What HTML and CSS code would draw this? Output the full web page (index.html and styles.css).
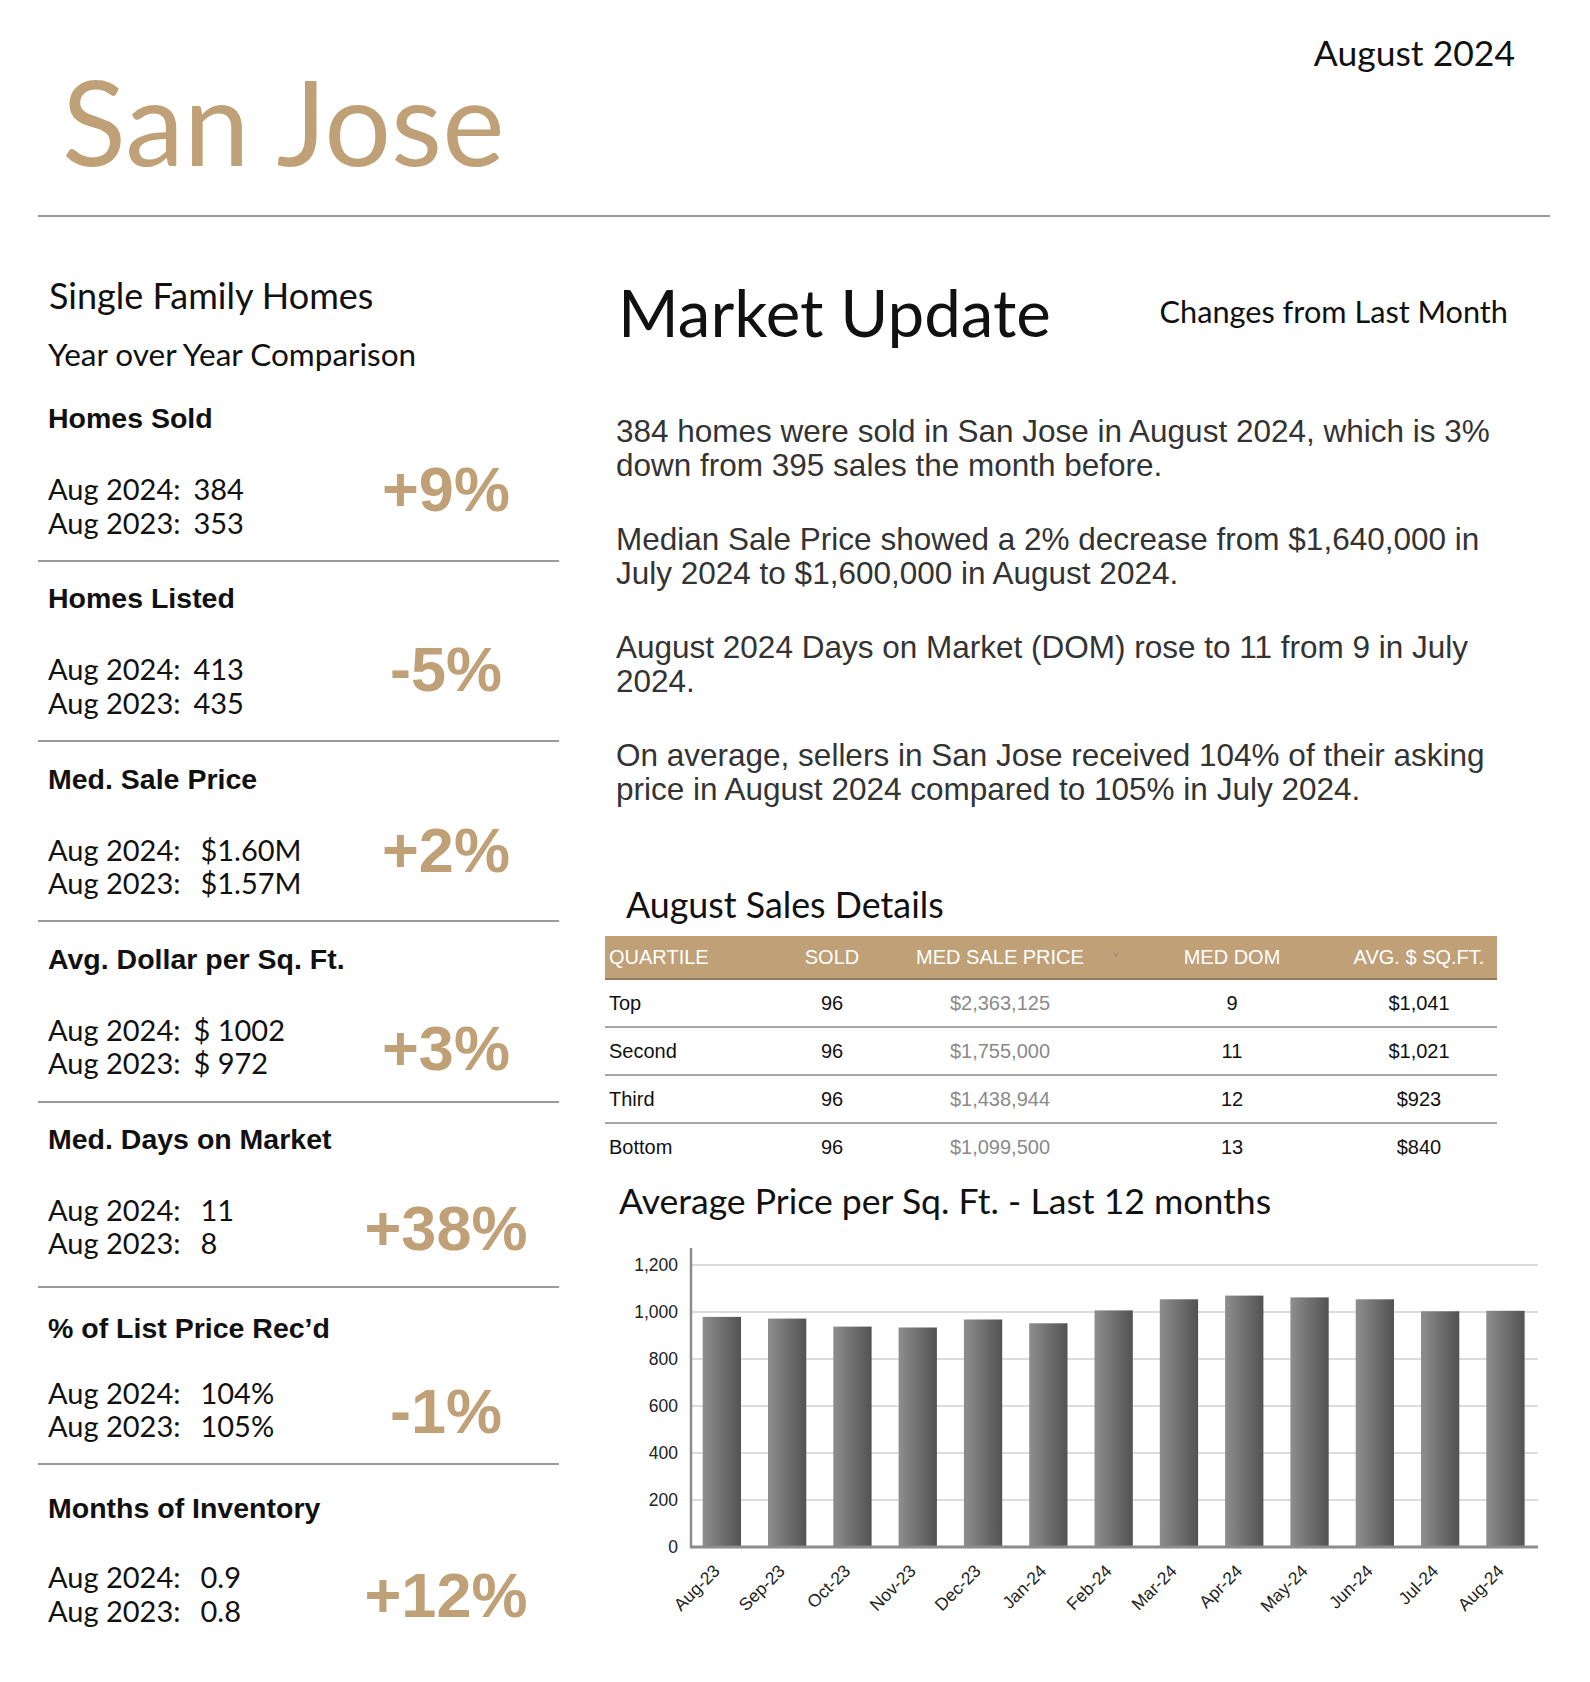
FILE: index.html
```html
<!DOCTYPE html>
<html lang="en">
<head>
<meta charset="utf-8">
<title>San Jose Market Update - August 2024</title>
<link rel="stylesheet" href="styles.css">
</head>
<body>
<div class="page">
  <header class="masthead">
    <h1 class="city">San Jose</h1>
    <div class="date">August 2024</div>
  </header>
  <hr class="rule">
  <main class="content">
    <aside class="stats">
      <h2 class="segment">Single Family Homes</h2>
      <p class="compare">Year over Year Comparison</p>

      <section class="stat stat--first">
        <h3 class="stat-title">Homes Sold</h3>
        <div class="stat-body">
          <div class="stat-rows">
            <div><span>Aug 2024:</span><span class="stat-val">384</span></div>
            <div><span>Aug 2023:</span><span class="stat-val">353</span></div>
          </div>
          <div class="stat-change stat-change--raised">+9%</div>
        </div>
      </section>

      <section class="stat">
        <h3 class="stat-title">Homes Listed</h3>
        <div class="stat-body">
          <div class="stat-rows">
            <div><span>Aug 2024:</span><span class="stat-val">413</span></div>
            <div><span>Aug 2023:</span><span class="stat-val">435</span></div>
          </div>
          <div class="stat-change stat-change--raised">-5%</div>
        </div>
      </section>

      <section class="stat">
        <h3 class="stat-title">Med. Sale Price</h3>
        <div class="stat-body">
          <div class="stat-rows">
            <div><span>Aug 2024:</span><span class="stat-val stat-val--wide">$1.60M</span></div>
            <div><span>Aug 2023:</span><span class="stat-val stat-val--wide">$1.57M</span></div>
          </div>
          <div class="stat-change stat-change--raised">+2%</div>
        </div>
      </section>

      <section class="stat">
        <h3 class="stat-title">Avg. Dollar per Sq. Ft.</h3>
        <div class="stat-body">
          <div class="stat-rows">
            <div><span>Aug 2024:</span><span class="stat-val">$ 1002</span></div>
            <div><span>Aug 2023:</span><span class="stat-val">$ 972</span></div>
          </div>
          <div class="stat-change">+3%</div>
        </div>
      </section>

      <section class="stat stat--roomy">
        <h3 class="stat-title">Med. Days on Market</h3>
        <div class="stat-body">
          <div class="stat-rows">
            <div><span>Aug 2024:</span><span class="stat-val stat-val--wide">11</span></div>
            <div><span>Aug 2023:</span><span class="stat-val stat-val--wide">8</span></div>
          </div>
          <div class="stat-change">+38%</div>
        </div>
      </section>

      <section class="stat stat--list">
        <h3 class="stat-title">% of List Price Rec’d</h3>
        <div class="stat-body stat-body--tight">
          <div class="stat-rows">
            <div><span>Aug 2024:</span><span class="stat-val stat-val--wide">104%</span></div>
            <div><span>Aug 2023:</span><span class="stat-val stat-val--wide">105%</span></div>
          </div>
          <div class="stat-change">-1%</div>
        </div>
      </section>

      <section class="stat stat--last">
        <h3 class="stat-title">Months of Inventory</h3>
        <div class="stat-body stat-body--snug">
          <div class="stat-rows">
            <div><span>Aug 2024:</span><span class="stat-val stat-val--wide">0.9</span></div>
            <div><span>Aug 2023:</span><span class="stat-val stat-val--wide">0.8</span></div>
          </div>
          <div class="stat-change">+12%</div>
        </div>
      </section>
    </aside>

    <section class="update">
      <div class="update-head">
        <h2 class="update-title">Market Update</h2>
        <div class="update-sub">Changes from Last Month</div>
      </div>

      <div class="summary">
        <p>384 homes were sold in San Jose in August 2024, which is 3% down from 395 sales the month before.</p>
        <p>Median Sale Price showed a 2% decrease from $1,640,000 in July 2024 to $1,600,000 in August 2024.</p>
        <p>August 2024 Days on Market (DOM) rose to 11 from 9 in July 2024.</p>
        <p>On average, sellers in San Jose received 104% of their asking price in August 2024 compared to 105% in July 2024.</p>
      </div>

      <h2 class="details-title">August Sales Details</h2>
      <table class="sales-table">
        <colgroup>
          <col class="col-q"><col class="col-sold"><col class="col-price"><col class="col-dom"><col class="col-avg">
        </colgroup>
        <thead>
          <tr>
            <th>QUARTILE</th>
            <th>SOLD</th>
            <th class="sortable">MED SALE PRICE<span class="sort"></span></th>
            <th>MED DOM</th>
            <th>AVG. $ SQ.FT.</th>
          </tr>
        </thead>
        <tbody>
          <tr><td>Top</td><td>96</td><td class="price">$2,363,125</td><td>9</td><td>$1,041</td></tr>
          <tr><td>Second</td><td>96</td><td class="price">$1,755,000</td><td>11</td><td>$1,021</td></tr>
          <tr><td>Third</td><td>96</td><td class="price">$1,438,944</td><td>12</td><td>$923</td></tr>
          <tr><td>Bottom</td><td>96</td><td class="price">$1,099,500</td><td>13</td><td>$840</td></tr>
        </tbody>
      </table>

      <h2 class="chart-title">Average Price per Sq. Ft. - Last 12 months</h2>
      <svg class="chart" width="945" height="400" viewBox="0 0 945 400" xmlns="http://www.w3.org/2000/svg">
        <defs>
          <linearGradient id="barGrad" x1="0" y1="0" x2="1" y2="0">
            <stop offset="0" stop-color="#8e8e8e"/>
            <stop offset="1" stop-color="#525252"/>
          </linearGradient>
        </defs>
        <g class="grid">
          <line x1="86" y1="35" x2="933" y2="35"/>
          <line x1="86" y1="82" x2="933" y2="82"/>
          <line x1="86" y1="129" x2="933" y2="129"/>
          <line x1="86" y1="176" x2="933" y2="176"/>
          <line x1="86" y1="223" x2="933" y2="223"/>
          <line x1="86" y1="270" x2="933" y2="270"/>
        </g>
        <g class="ylabels">
          <text x="73" y="41">1,200</text>
          <text x="73" y="88">1,000</text>
          <text x="73" y="135">800</text>
          <text x="73" y="182">600</text>
          <text x="73" y="229">400</text>
          <text x="73" y="276">200</text>
          <text x="73" y="323">0</text>
        </g>
        <g class="bars">
          <rect x="97.7" y="86.9" width="38.3" height="230.1"/>
          <rect x="163.0" y="88.6" width="38.3" height="228.4"/>
          <rect x="228.3" y="96.6" width="38.3" height="220.4"/>
          <rect x="293.6" y="97.5" width="38.3" height="219.5"/>
          <rect x="358.9" y="89.5" width="38.3" height="227.5"/>
          <rect x="424.2" y="93.3" width="38.3" height="223.7"/>
          <rect x="489.5" y="80.4" width="38.3" height="236.6"/>
          <rect x="554.8" y="69.3" width="38.3" height="247.7"/>
          <rect x="620.1" y="65.6" width="38.3" height="251.4"/>
          <rect x="685.4" y="67.4" width="38.3" height="249.6"/>
          <rect x="750.7" y="69.3" width="38.3" height="247.7"/>
          <rect x="816.0" y="81.3" width="38.3" height="235.7"/>
          <rect x="881.3" y="80.8" width="38.3" height="236.2"/>
        </g>
        <line class="axis" x1="86" y1="18" x2="86" y2="318"/>
        <line class="axis axis--x" x1="85" y1="317" x2="933" y2="317"/>
        <g class="xlabels">
          <text transform="translate(116,342) rotate(-45)">Aug-23</text>
          <text transform="translate(181,342) rotate(-45)">Sep-23</text>
          <text transform="translate(246.5,342) rotate(-45)">Oct-23</text>
          <text transform="translate(312,342) rotate(-45)">Nov-23</text>
          <text transform="translate(377,342) rotate(-45)">Dec-23</text>
          <text transform="translate(442.5,342) rotate(-45)">Jan-24</text>
          <text transform="translate(508,342) rotate(-45)">Feb-24</text>
          <text transform="translate(573,342) rotate(-45)">Mar-24</text>
          <text transform="translate(638.5,342) rotate(-45)">Apr-24</text>
          <text transform="translate(704,342) rotate(-45)">May-24</text>
          <text transform="translate(769,342) rotate(-45)">Jun-24</text>
          <text transform="translate(834.5,342) rotate(-45)">Jul-24</text>
          <text transform="translate(900,342) rotate(-45)">Aug-24</text>
        </g>
      </svg>
    </section>
  </main>
</div>
</body>
</html>
```

FILE: styles.css
```css
* {
  box-sizing: border-box;
}

body {
  margin: 0;
  background: #ffffff;
  color: #111111;
  font-family: Lato, "Liberation Sans", sans-serif;
}

.page {
  width: 1590px;
  min-height: 1682px;
}

/* ---------- masthead ---------- */
.masthead {
  display: flex;
  justify-content: space-between;
  align-items: flex-start;
  padding: 33px 75px 0 62px;
}

.city {
  margin: 29px 0 0;
  font: 400 118px/118px Lato, sans-serif;
  color: #bfa077;
}

.date {
  font: 400 35.5px/40px Lato, sans-serif;
  color: #111111;
}

.rule {
  height: 0;
  margin: 35px 40px 0 38px;
  border: 0;
  border-top: 2px solid #9a9a9a;
}

/* ---------- two columns ---------- */
.content {
  display: grid;
  grid-template-columns: 521px 1fr;
  column-gap: 46px;
  margin: 0 40px 0 38px;
  padding-top: 57px;
}

/* ---------- left column ---------- */
.segment {
  margin: 0;
  padding-left: 11px;
  font: 400 36px/42px Lato, sans-serif;
}

.compare {
  margin: 19.5px 0 0;
  padding-left: 10px;
  font: 400 31.5px/36px Lato, sans-serif;
}

.stat {
  padding: 19.3px 13px 20.85px 10px;
  border-bottom: 2px solid #9a9a9a;
}

.stat--first {
  margin-top: 10.5px;
}

.stat--roomy {
  padding-bottom: 26.2px;
}

.stat--list {
  padding-top: 22.5px;
}

.stat--last {
  padding-top: 26px;
  border-bottom: 0;
}

.stat-title {
  margin: 0;
  font: 700 28.5px/34px "Liberation Sans", Arial, sans-serif;
  color: #111111;
}

.stat-body {
  display: flex;
  align-items: flex-end;
  margin-top: 37px;
}

.stat-body--tight {
  margin-top: 31px;
}

.stat-body--snug {
  margin-top: 35px;
}

.stat-rows {
  flex: 1;
  font: 400 29px/33.5px Lato, sans-serif;
  color: #111111;
  white-space: nowrap;
}

.stat-val {
  margin-left: 13px;
}

.stat-val--wide {
  margin-left: 20px;
}

.stat-change {
  width: 200px;
  text-align: center;
  font: 700 63px/63px "Liberation Sans", Arial, sans-serif;
  color: #bfa077;
}

.stat-change--raised {
  margin-top: -18px;
  margin-bottom: 18px;
}

/* ---------- right column ---------- */
.update {
  display: flex;
  flex-direction: column;
}

.update-head {
  display: flex;
  justify-content: space-between;
  align-items: flex-start;
  padding: 0 42px 0 13px;
}

.update-title {
  margin: 0;
  font: 400 65.5px/76px Lato, sans-serif;
  color: #111111;
}

.update-sub {
  margin-top: 19.6px;
  font: 400 30.7px/36px Lato, sans-serif;
  color: #111111;
}

.summary {
  margin-top: 63.6px;
  padding-left: 11px;
}

.summary p {
  max-width: 910px;
  margin: 0 0 39px;
  font: 400 31.5px/34.5px "Liberation Sans", Arial, sans-serif;
  color: #333333;
}

.summary p:last-child {
  margin-bottom: 0;
}

.details-title {
  margin: 78px 0 0;
  padding-left: 21px;
  font: 400 35.8px/40px Lato, sans-serif;
  color: #111111;
}

.sales-table {
  width: 892px;
  margin-top: 11px;
  border-collapse: separate;
  border-spacing: 0;
  table-layout: fixed;
  font: 400 20px "Liberation Sans", Arial, sans-serif;
}

.col-q { width: 182px; }
.col-sold { width: 90px; }
.col-price { width: 246px; }
.col-dom { width: 218px; }
.col-avg { width: 156px; }

.sales-table th {
  padding: 0;
  line-height: 42px;
  font-weight: 400;
  color: #ffffff;
  background: #bfa077;
  border-bottom: 2px solid #8f7c60;
  text-align: center;
  white-space: nowrap;
}

.sales-table td {
  padding: 0;
  line-height: 46px;
  color: #111111;
  text-align: center;
  border-bottom: 2px solid #a6a6a6;
}

.sales-table tbody tr:last-child td {
  border-bottom: 0;
}

.sales-table th:first-child,
.sales-table td:first-child {
  padding-left: 4px;
  text-align: left;
}

.sales-table td.price {
  color: #8a8a8a;
}

.sortable {
  position: relative;
}

.sort {
  position: absolute;
  top: 17px;
  right: 4px;
  width: 0;
  height: 0;
  border-left: 3px solid transparent;
  border-right: 3px solid transparent;
  border-top: 5px solid #a29278;
}

.chart-title {
  margin: 10px 0 0;
  padding-left: 14px;
  font: 400 35.6px/42px Lato, sans-serif;
  color: #111111;
}

.chart {
  display: block;
  margin-top: 8px;
}

.chart .grid line {
  stroke: #dcdcdc;
  stroke-width: 2;
}

.chart .axis {
  stroke: #8c8c8c;
  stroke-width: 2.5;
}

.chart .axis--x {
  stroke-width: 3;
}

.chart .bars rect {
  fill: url(#barGrad);
}

.chart text {
  font-family: "Liberation Sans", Arial, sans-serif;
  font-size: 17.5px;
  fill: #222222;
}

.chart .ylabels text {
  text-anchor: end;
}

.chart .xlabels text {
  text-anchor: end;
}
```
